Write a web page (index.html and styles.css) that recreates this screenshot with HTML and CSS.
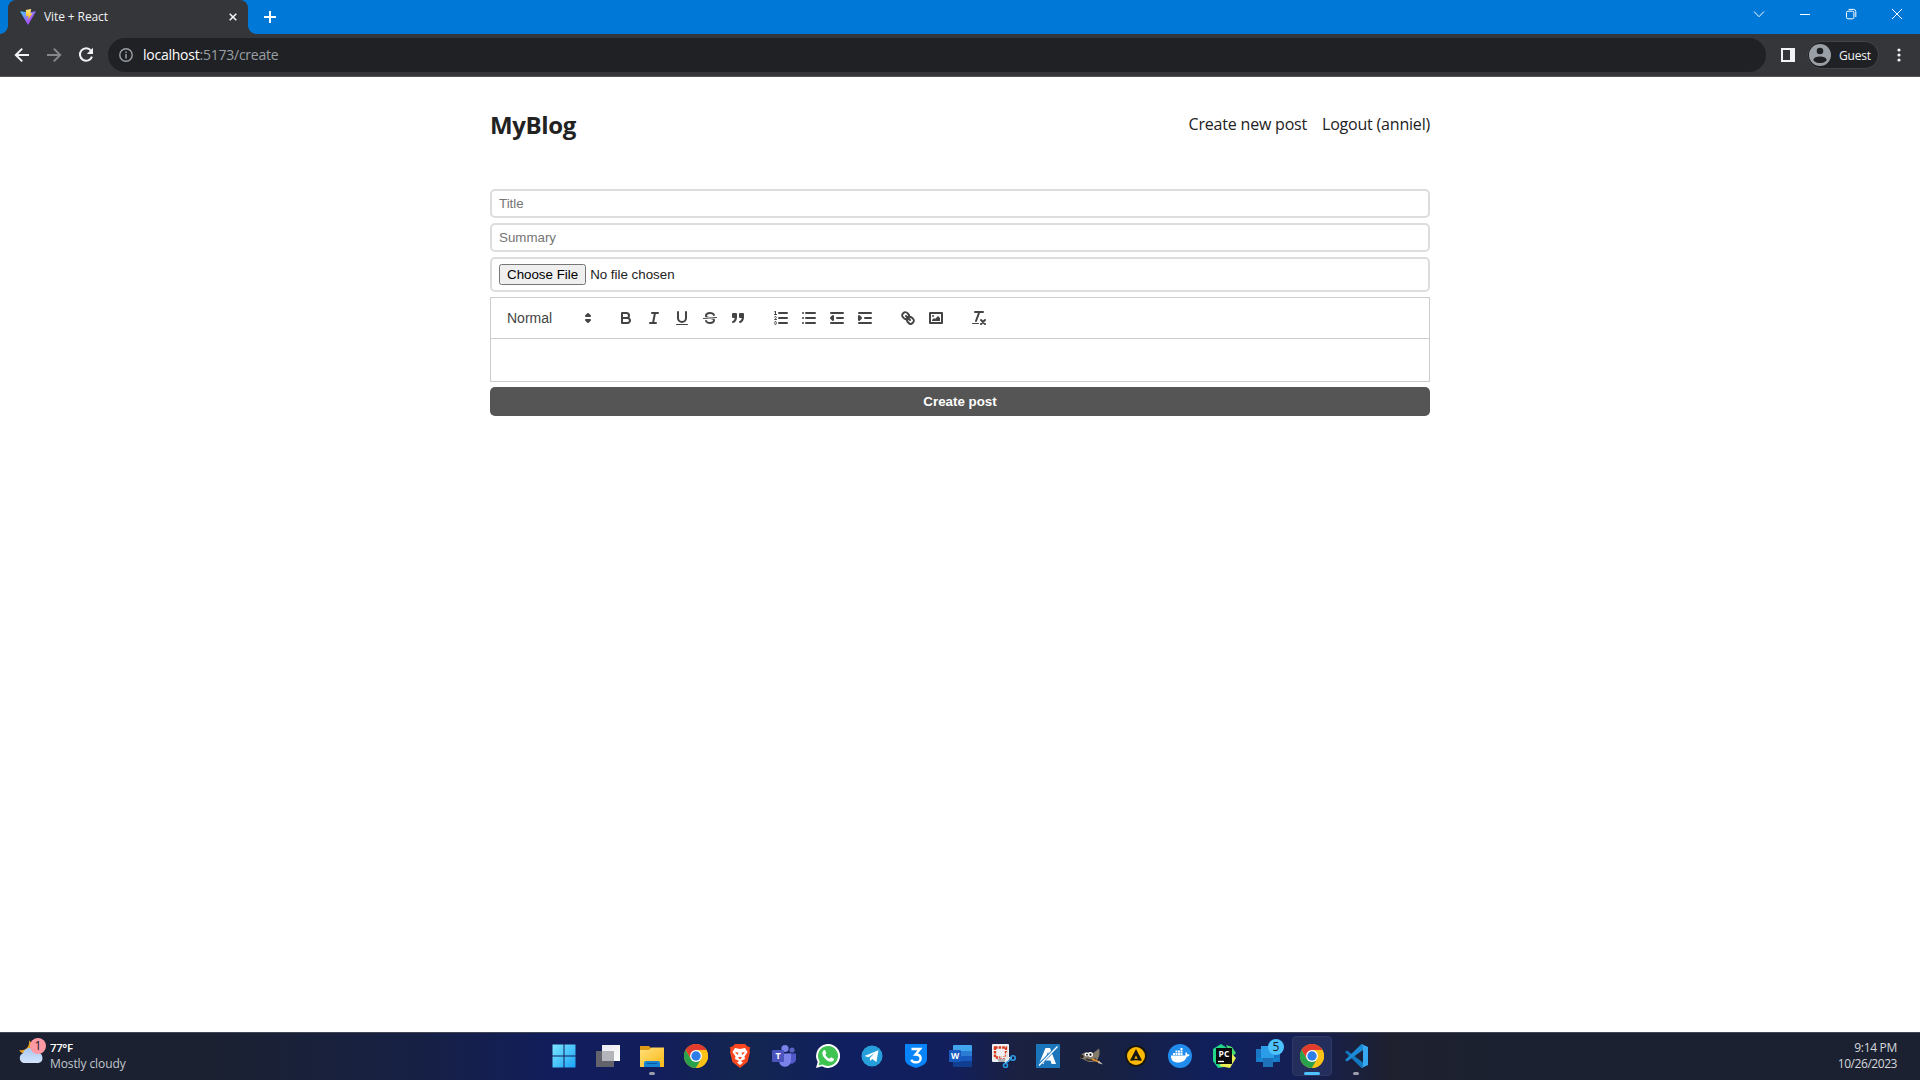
FILE: index.html
```html
<!DOCTYPE html>
<html lang="en">
<head>
<meta charset="utf-8">
<title>Vite + React</title>
<link rel="stylesheet" href="styles.css">
</head>
<body>
<svg class="defs" width="0" height="0" aria-hidden="true">
  <defs>
    <linearGradient id="viteBody" x1="0" y1="0" x2="1" y2="1"><stop offset="0" stop-color="#41d1ff"/><stop offset=".6" stop-color="#a45cff"/><stop offset="1" stop-color="#bd34fe"/></linearGradient>
    <linearGradient id="viteBolt" x1="0" y1="0" x2="0" y2="1"><stop offset="0" stop-color="#ffea83"/><stop offset="1" stop-color="#ffa800"/></linearGradient>
    <linearGradient id="winTile" x1="0" y1="0" x2="1" y2="1"><stop offset="0" stop-color="#7be6ff"/><stop offset="1" stop-color="#1aa3f5"/></linearGradient>
    <linearGradient id="cloud" x1="0" y1="0" x2="0" y2="1"><stop offset="0" stop-color="#a5c6f5"/><stop offset="1" stop-color="#d5e5fb"/></linearGradient>
    <linearGradient id="folder" x1="0" y1="0" x2="1" y2="1"><stop offset="0" stop-color="#ffe07a"/><stop offset="1" stop-color="#fbb917"/></linearGradient>
    <linearGradient id="pane" x1="0" y1="0" x2="1" y2="1"><stop offset="0" stop-color="#e9e9ef"/><stop offset="1" stop-color="#fff"/></linearGradient>
    <symbol id="chrome" viewBox="0 0 24 24">
      <circle cx="12" cy="12" r="12" fill="#fbc116"/>
      <path d="M1.6 6A12 12 0 0 1 22.4 6H12L7 15Z" fill="#e33b2e"/>
      <path d="M1.6 6A12 12 0 0 0 12 24L17.2 15L6.8 15Z" fill="#2aa24c"/>
      <path d="M22.4 6A12 12 0 0 1 12 24L17.2 15L12 6Z" fill="#fbc116"/>
      <circle cx="12" cy="12" r="6" fill="#fff"/><circle cx="12" cy="12" r="4.7" fill="#2f7de9"/>
    </symbol>
  </defs>
</svg>

<header class="browser">
  <div class="tabstrip">
    <div class="tab">
      <svg class="favicon" viewBox="0 0 16 16"><path d="M0 2.2L8 16L16 2.2L8.5 3.6Z" fill="url(#viteBody)"/><path d="M5.8 1L11.2 0L10.4 4.5L12.5 4.2L8.2 11L8.5 7L6.2 7.4Z" fill="url(#viteBolt)"/></svg>
      <span class="tab-title">Vite + React</span>
      <svg class="tab-close" viewBox="0 0 8 8"><path d="M.7 .7L7.3 7.3M7.3 .7L.7 7.3" stroke="#f1f3f4" stroke-width="1.6"/></svg>
    </div>
    <svg class="new-tab" viewBox="0 0 12 12"><path d="M6 0V12M0 6H12" stroke="#fff" stroke-width="2"/></svg>
    <div class="window-controls">
      <svg viewBox="0 0 12 12"><path d="M1 3.5L6 8.7L11 3.5"/></svg>
      <svg viewBox="0 0 12 12"><path d="M1 6.5H11"/></svg>
      <svg viewBox="0 0 12 12"><rect x="1.5" y="3.2" width="7.4" height="7.6" rx="1.5"/><path d="M3.6 1.4H8.6A2.3 2.3 0 0 1 10.8 3.6V9"/></svg>
      <svg viewBox="0 0 12 12"><path d="M1 1L11 11M11 1L1 11"/></svg>
    </div>
  </div>
  <div class="toolbar">
    <svg class="nav-icon" viewBox="0 0 16 16"><path d="M15 8H2M8.2 1.6L1.8 8L8.2 14.4" fill="none" stroke="#f1f3f4" stroke-width="2"/></svg>
    <svg class="nav-icon" viewBox="0 0 16 16"><path d="M1 8H14M7.8 1.6L14.2 8L7.8 14.4" fill="none" stroke="#85878a" stroke-width="2"/></svg>
    <svg class="nav-icon" viewBox="0 0 16 16"><path d="M13 3.6A6.2 6.2 0 1 0 14 9.6" fill="none" stroke="#f1f3f4" stroke-width="2"/><path d="M15 .8V7H8.8Z" fill="#f1f3f4"/></svg>
    <div class="omnibox">
      <svg class="info" viewBox="0 0 14 14"><circle cx="7" cy="7" r="6.2" fill="none" stroke="#9aa0a6" stroke-width="1.4"/><path d="M7 6V10.5M7 3.4V5" stroke="#9aa0a6" stroke-width="1.5"/></svg>
      <span class="url"><b>localhost</b>:5173/create</span>
    </div>
    <svg class="side-panel" viewBox="0 0 14 14"><path d="M0 0H14V14H0ZM2 2V12H9V2Z" fill="#f1f3f4" fill-rule="evenodd"/></svg>
    <div class="profile">
      <svg viewBox="0 0 22 22"><circle cx="11" cy="11" r="11" fill="#9aa0a6"/><circle cx="11" cy="7" r="3.3" fill="#202124"/><path d="M4.3 16.2C4.5 13.4 8 12.4 11 12.4S17.5 13.4 17.7 16.2C16 18.2 13.6 19 11 19S6 18.2 4.3 16.2Z" fill="#202124"/></svg>
      <span>Guest</span>
    </div>
    <svg class="menu" viewBox="0 0 4 14"><circle cx="2" cy="2" r="1.6"/><circle cx="2" cy="7" r="1.6"/><circle cx="2" cy="12" r="1.6"/></svg>
  </div>
</header>

<main class="page">
  <header class="site-header">
    <a class="logo">MyBlog</a>
    <nav><a class="link-create">Create new post</a><a class="link-logout">Logout (anniel)</a></nav>
  </header>
  <form class="post-form">
    <input type="text" placeholder="Title">
    <input type="text" placeholder="Summary">
    <input type="file">
    <div class="editor">
      <div class="editor-toolbar">
        <div class="picker"><span>Normal</span><svg class="q" viewBox="0 0 18 18"><polygon class="s" points="7 11 9 13 11 11 7 11"/><polygon class="s" points="7 7 9 5 11 7 7 7"/></svg></div>
        <div class="group">
          <svg class="q" viewBox="0 0 18 18"><path class="s" d="M5,4H9.5A2.5,2.5,0,0,1,12,6.5v0A2.5,2.5,0,0,1,9.5,9H5V4Z"/><path class="s" d="M5,9h5.5A2.5,2.5,0,0,1,13,11.5v0A2.5,2.5,0,0,1,10.5,14H5V9Z"/></svg>
          <svg class="q" viewBox="0 0 18 18"><path class="s" d="M7 4H13M5 14H11M8 14L10 4"/></svg>
          <svg class="q" viewBox="0 0 18 18"><path class="s" d="M5,3V9a4.012,4.012,0,0,0,4,4H9a4.012,4.012,0,0,0,4-4V3"/><rect class="f" x="3" y="15" width="12" height="1" rx=".5"/></svg>
          <svg class="q" viewBox="0 0 18 18"><path class="s t" d="M15.5 8.5L2.5 9.5"/><path class="f" d="M9.007,8C6.542,7.791,6,7.519,6,6.5,6,5.792,7.283,5,9,5c1.571,0,2.765.679,2.969,1.309a1,1,0,0,0,1.9-.617C13.356,4.106,11.354,3,9,3,6.2,3,4,4.538,4,6.5a3.2,3.2,0,0,0,.5,1.843Z"/><path class="f" d="M8.984,10C11.457,10.208,12,10.479,12,11.5c0,0.708-1.283,1.5-3,1.5-1.571,0-2.765-.679-2.969-1.309a1,1,0,1,0-1.9.617C4.644,13.894,6.646,15,9,15c2.8,0,5-1.538,5-3.5a3.2,3.2,0,0,0-.5-1.843Z"/></svg>
          <svg class="q" viewBox="0 0 18 18"><rect class="s f" x="4" y="5" width="3" height="3"/><rect class="s f" x="11" y="5" width="3" height="3"/><path class="s f" d="M7,8c0,4.031-3,5-3,5M14,8c0,4.031-3,5-3,5"/></svg>
        </div>
        <div class="group">
          <svg class="q" viewBox="0 0 18 18"><path class="s" d="M7 4H15M7 9H15M7 14H15"/><path class="s t" d="M2.5 5.5H4.5"/><path class="f" d="M3.5,6A0.5,0.5,0,0,1,3,5.5V3.085l-0.276.138A0.5,0.5,0,0,1,2.053,3c-0.124-.247-0.023-0.324.224-0.447l1-.5A0.5,0.5,0,0,1,4,2.5v3A0.5,0.5,0,0,1,3.5,6Z"/><path class="s t" d="M4.5,10.5h-2c0-.234,1.85-1.076,1.85-2.234A0.959,0.959,0,0,0,2.5,8.156"/><path class="s t" d="M2.5,14.846a0.959,0.959,0,0,0,1.85-.109A0.7,0.7,0,0,0,3.75,14a0.688,0.688,0,0,0,.6-0.736,0.959,0.959,0,0,0-1.85-.109"/></svg>
          <svg class="q" viewBox="0 0 18 18"><path class="s" d="M6 4H15M6 9H15M6 14H15M3 4H3M3 9H3M3 14H3"/></svg>
          <svg class="q" viewBox="0 0 18 18"><path class="s" d="M3 14H15M3 4H15M9 9H15"/><polyline class="s f" points="5 7 5 11 3 9 5 7"/></svg>
          <svg class="q" viewBox="0 0 18 18"><path class="s" d="M3 14H15M3 4H15M9 9H15"/><polyline class="s f" points="3 7 3 11 5 9 3 7"/></svg>
        </div>
        <div class="group">
          <svg class="q" viewBox="0 0 18 18"><path class="s" d="M7 7L11 11M8.9,4.577a3.476,3.476,0,0,1,.36,4.679A3.476,3.476,0,0,1,4.577,8.9C3.185,7.5,2.035,6.4,4.217,4.217S7.5,3.185,8.9,4.577Z"/><path class="s" d="M13.423,9.1a3.476,3.476,0,0,0-4.679-.36,3.476,3.476,0,0,0,.36,4.679c1.392,1.392,2.5,2.542,4.679.36S14.815,10.5,13.423,9.1Z"/></svg>
          <svg class="q" viewBox="0 0 18 18"><rect class="s" x="3" y="4" width="12" height="10"/><circle class="f" cx="6" cy="7" r="1"/><polyline class="f" points="5 12 5 11 7 9 8 10 11 7 13 9 13 12 5 12"/></svg>
        </div>
        <div class="group">
          <svg class="q" viewBox="0 0 18 18"><path class="s" d="M5 3H13M6 12L9.35 3M11 11L15 15M15 11L11 15"/><rect class="f" x="2" y="14" width="7" height="1" rx=".5"/></svg>
        </div>
      </div>
      <div class="editor-body"></div>
    </div>
    <button type="button">Create post</button>
  </form>
</main>

<footer class="taskbar">
  <div class="weather">
    <div class="weather-icon">
      <svg viewBox="0 0 26 26"><path d="M11 3.5C12 9 8 14.5 1.2 13C3 18 12 18 14 11C14.800 7.500 13 5 11 3.500Z" fill="#e9a11f"/><path d="M5.500 26A5.200 5.200 0 0 1 5 16.200A8 8 0 0 1 20 15.800A5.200 5.200 0 0 1 20.500 26Z" fill="url(#cloud)"/></svg>
      <span class="badge pink">1</span>
    </div>
    <div class="weather-text"><span class="temp">77°F</span><span class="sky">Mostly cloudy</span></div>
  </div>
  <div class="apps">
    <div class="app"><svg viewBox="0 0 24 24"><path d="M.5 .5H11.500V11.500H.5ZM12.500 .5H23.500V11.500H12.500ZM.5 12.500H11.500V23.500H.5ZM12.500 12.500H23.500V23.500H12.500Z" fill="url(#winTile)"/></svg></div>
    <div class="app"><svg viewBox="0 0 24 24"><rect x="0" y="7" width="18" height="16" fill="#62636b"/><rect x="6" y="1" width="18" height="16" fill="url(#pane)"/><rect x="6" y="7" width="12" height="10" fill="#b4b5ba"/></svg></div>
    <div class="app running"><svg viewBox="0 0 24 24"><path d="M0 2H9L11 4H13V8H0Z" fill="#dc9a16"/><path d="M0 6H9L11.500 3.500H24V23H0Z" fill="url(#folder)"/><path d="M4 23V19Q4 17 6 17H18Q20 17 20 19V23Z" fill="#1684d3"/><path d="M7 19.500H17" stroke="#0b579d"/></svg></div>
    <div class="app"><svg viewBox="0 0 24 24"><use href="#chrome"/></svg></div>
    <div class="app"><svg viewBox="0 0 24 24"><path d="M7 0H17L19.500 2.500L22 3L21.500 7L22 8L19.500 18L12 24L4.500 18L2 8L2.500 7L2 3L4.500 2.500Z" fill="#f9471f"/><path d="M7 4L12 5L17 4L19.500 8L16.500 12.500L17 15L12.800 17L15 18.500L12 21L9 18.500L11.200 17L7 15L7.500 12.500L4.500 8Z" fill="#fff"/><path d="M7 8L10.500 8.800L9.500 11ZM17 8L13.500 8.800L14.500 11ZM10 13.500L12 15.500L14 13.500L12 12.800Z" fill="#f9471f"/></svg></div>
    <div class="app"><svg viewBox="0 0 24 24"><circle cx="20" cy="6" r="2.600" fill="#5b62c5"/><path d="M16 9.500H24V16A4.500 4.500 0 0 1 16 18Z" fill="#5059c9"/><circle cx="13" cy="4.500" r="3.600" fill="#7b83eb"/><path d="M7 9.500H19V16A6 6 0 0 1 7 17.500Z" fill="#7b83eb"/><rect x="0" y="6" width="12" height="12" rx="1" fill="#4b53bc"/><text class="glyph" x="6" y="15.300" font-size="9">T</text></svg></div>
    <div class="app"><svg viewBox="0 0 24 24"><path d="M0 24L1.700 18A12 12 0 1 1 6 22.300Z" fill="#fff"/><path d="M2.600 21.400L3.700 17.500A10 10 0 1 1 6.700 20.400Z" fill="#3fc351"/><path d="M7.500 6.500C8.300 5.700 9 6 9.300 6.600L10.300 9C10.300 9.700 9.700 10.200 9.300 10.700C10.300 12.500 11.700 13.900 13.600 14.700L15 13.200L18 14.700C18.300 16.500 16.500 17.700 15 17.700C11 17.700 6.500 12.800 6.300 9.500C6.300 8.200 7 7 7.500 6.500Z" fill="#fff"/></svg></div>
    <div class="app"><svg viewBox="0 0 24 24"><circle cx="12" cy="12" r="10.500" fill="#279fda"/><path d="M4.500 12L18.500 6.200L16.400 18L12.300 14.900L10.200 17.100L9.800 13.900L15 9L8.500 13.200Z" fill="#fff"/></svg></div>
    <div class="app"><svg viewBox="0 0 24 24"><path d="M1 0H23V15C23 20 18 22 12 24C6 22 1 20 1 15Z" fill="#0784fa"/><path d="M7.500 5H16L11.500 10.500C18.500 10.500 18 18.300 12 18.300C9.500 18.300 8 17.200 7.200 15.800" fill="none" stroke="#fff" stroke-width="2.400"/></svg></div>
    <div class="app"><svg viewBox="0 0 24 24"><path d="M6 1H23Q24 1 24 2V7H5V2Q5 1 6 1Z" fill="#41a5ee"/><path d="M5 7H24V12H5Z" fill="#2b7cd3"/><path d="M5 12H24V17H5Z" fill="#185abd"/><path d="M5 17H24V22Q24 23 23 23H6Q5 23 5 22Z" fill="#103f91"/><rect x="1" y="6" width="12" height="12" rx="1" fill="#185abd"/><text class="glyph" x="7" y="15" font-size="8.500">W</text></svg></div>
    <div class="app"><svg viewBox="0 0 24 24"><rect x="0" y="0" width="17" height="18" rx="1" fill="#f0f0f2"/><path d="M5 15H14V18H7Z" fill="#aeb0b5"/><rect x="3" y="3.500" width="11" height="10" fill="none" stroke="#d83b1c" stroke-width="2.400" stroke-dasharray="2.600 1"/><path d="M8 13L20 14M13.500 19L15 8" stroke="#e8e8ea" stroke-width="1.500"/><circle cx="21" cy="14" r="2.200" fill="none" stroke="#2a9be5" stroke-width="1.600"/><circle cx="13.500" cy="21.500" r="2" fill="none" stroke="#2a9be5" stroke-width="1.600"/><path d="M14 19L19 15" stroke="#2a9be5" stroke-width="1.600"/></svg></div>
    <div class="app"><svg viewBox="0 0 24 24"><path d="M0 0H24V24H0Z" fill="#1b75bb"/><path d="M3 20L9.500 4H14L20 20H15.500L14.500 16.500H9L7.500 20ZM10 13H13.500L12 8Z" fill="#fff" fill-rule="evenodd"/><path d="M2 22L22 2" stroke="#1b75bb" stroke-width="3"/><path d="M3 21.500L21.500 2.500" stroke="#fff" stroke-width="1.300"/></svg></div>
    <div class="app"><svg viewBox="0 0 24 24"><path d="M1 11C4 8 7 8.500 10 8L12 10L19 4.500C20 8 20 13 16.500 17C12 19 7 18 4 15.500L0 14Z" fill="#82796b"/><circle cx="1.800" cy="12.500" r="1.800" fill="#25211d"/><circle cx="6.500" cy="10.500" r="2" fill="#fff"/><circle cx="10.500" cy="10.500" r="2.500" fill="#fff"/><circle cx="7" cy="10.700" r=".9"/><circle cx="10.500" cy="10.700" r="1.100"/><path d="M6 15Q11 17.500 16 15" stroke="#37312b" stroke-width="1.500" fill="none"/><path d="M12 15L19 18" stroke="#e9912c" stroke-width="1.800"/><path d="M19 17L23 20.500L18 19Z" fill="#d7d0c5"/></svg></div>
    <div class="app"><svg viewBox="0 0 24 24"><circle cx="12" cy="12" r="11" fill="#171611"/><circle cx="12" cy="12" r="9" fill="#ffb900"/><path d="M12 5L18 16.500H14.500L12 11.500L9.500 16.500H6ZM10 14H14" fill="#171611"/><path d="M6.800 15.500H17" stroke="#171611" stroke-width="1.600"/></svg></div>
    <div class="app"><svg viewBox="0 0 24 24"><circle cx="12" cy="12" r="12" fill="#218cec"/><path d="M3 11.500H17.500Q17 9.300 18 8Q19.300 9 19.400 10.400Q21 10 21.700 11Q20.500 12.800 18.800 12.800C17 17 14 18.500 10 18.500C5.500 18.500 3 16.500 3 11.500Z" fill="#fff"/><path d="M5 9H7V11H5ZM7.500 9H9.500V11H7.500ZM10 9H12V11H10ZM12.500 9H14.500V11H12.500ZM7.500 6.500H9.500V8.500H7.500ZM10 6.500H12V8.500H10ZM12.500 6.500H14.500V8.500H12.500ZM12.500 4H14.500V6H12.500Z" fill="#fff"/></svg></div>
    <div class="app"><svg viewBox="0 0 24 24"><path d="M1 5L9 0L15 4L12 23L6 24L1 17Z" fill="#21d789"/><path d="M14 1L20 3L24 9L20 13Z" fill="#45dc70"/><path d="M20 10L24 14L18 24L7 22Z" fill="#e9ee55"/><rect x="4" y="4" width="16" height="16" fill="#0b0b0d"/><text class="glyph" x="12" y="13" font-size="8.500">PC</text><path d="M6 17.500H12" stroke="#fff" stroke-width="1.300"/></svg></div>
    <div class="app"><svg viewBox="0 0 24 24"><path d="M0 5H7V18H0Z" fill="#1976c5"/><path d="M17 7H24V18H17Z" fill="#1976c5"/><path d="M5 2H18V18H5Z" fill="#2b9de8"/><path d="M0 14H24L20 18H4Z" fill="#1683d1"/><path d="M7 14H17V23H7Z" fill="#1e72b9"/></svg><span class="badge blue">5</span></div>
    <div class="app active"><svg viewBox="0 0 24 24"><use href="#chrome"/></svg></div>
    <div class="app running"><svg viewBox="0 0 24 24"><path d="M1 8L3 6.500L19 18.500V23.500L17.500 24Z" fill="#1279c0"/><path d="M1 16L3 17.500L19 6V1L17.500 0Z" fill="#1b8bd6"/><path d="M17.500 0L24 3V21L17.500 24Q19 23 19 21V3Q19 1 17.500 0Z" fill="#35a8f1"/></svg></div>
  </div>
  <div class="clock"><span class="time">9:14 PM</span><span class="date">10/26/2023</span></div>
</footer>
</body>
</html>
```
FILE: styles.css
```css
* { box-sizing: border-box; }
body {
  margin: 0;
  height: 1080px;
  overflow: hidden;
  display: flex;
  flex-direction: column;
  background: #fff;
  color: #222;
  font-family: "Open Sans", "Noto Sans", sans-serif;
}
.defs { position: absolute; }
svg { display: block; flex: none; }

.browser { height: 77px; flex: none; background: #35363a; border-bottom: 1px solid #55525a; }
.tabstrip { height: 34px; display: flex; align-items: center; background: #0078d7; padding-left: 8px; }
.tab {
  position: relative;
  width: 240px;
  height: 34px;
  padding: 0 11px 0 12px;
  display: flex;
  align-items: center;
  background: #35363a;
  border-radius: 8px 8px 0 0;
  color: #f1f3f4;
}
.tab::before, .tab::after {
  content: "";
  position: absolute;
  bottom: 0;
  width: 8px;
  height: 8px;
}
.tab::before { left: -8px; background: radial-gradient(circle at 0 0, transparent 7.5px, #35363a 8px); }
.tab::after { right: -8px; background: radial-gradient(circle at 100% 0, transparent 7.5px, #35363a 8px); }
.favicon { width: 16px; height: 16px; }
.tab-title { margin-left: 8px; font-size: 12px; line-height: 16px; letter-spacing: -0.1px; }
.tab-close { width: 8px; height: 8px; margin-left: auto; }
.new-tab { width: 12px; height: 12px; margin-left: 16px; }
.window-controls { margin-left: auto; padding: 0 17px 6px 0; display: flex; gap: 34px; }
.window-controls svg { width: 12px; height: 12px; fill: none; stroke: #fff; stroke-width: 1; }

.toolbar { height: 42px; display: flex; align-items: center; padding-left: 14px; }
.nav-icon { width: 16px; height: 16px; margin-right: 16px; }
.omnibox {
  width: 1658px;
  height: 34px;
  margin-left: -2px;
  padding-left: 11px;
  display: flex;
  align-items: center;
  background: #202124;
  border-radius: 17px;
}
.info { width: 14px; height: 14px; }
.url { margin-left: 10px; font-size: 14px; line-height: 20px; letter-spacing: -0.24px; color: #9aa0a6; }
.url b { font-weight: 400; color: #fff; }
.side-panel { width: 14px; height: 14px; margin-left: 15px; }
.profile {
  width: 72px;
  height: 28px;
  margin-left: 12px;
  padding-left: 2px;
  display: flex;
  align-items: center;
  gap: 8px;
  background: #202124;
  border: 1px solid #434448;
  border-radius: 14px;
  color: #f1f3f4;
  font-size: 12px;
  letter-spacing: -0.2px;
}
.profile svg { width: 22px; height: 22px; margin-left: -1px; }
.menu { width: 4px; height: 14px; margin-left: 18px; fill: #f1f3f4; }

.page { flex: 1; width: 960px; margin: 0 auto; padding: 30px 10px 0; }
.site-header { height: 32px; margin-top: 1px; margin-bottom: 49px; display: flex; justify-content: space-between; align-items: center; }
.logo { font-size: 24px; font-weight: 700; letter-spacing: -0.35px; }
nav { display: flex; gap: 15px; font-size: 16px; }
.link-create { letter-spacing: -0.2px; }
.link-logout { letter-spacing: -0.2px; }

.post-form { display: flex; flex-direction: column; gap: 5px; font-family: "Liberation Sans", Arial, sans-serif; }
.post-form input {
  width: 100%;
  margin: 0;
  padding: 5px 7px;
  border: 2px solid #ddd;
  border-radius: 5px;
  background: #fff;
  font-family: "Liberation Sans", Arial, sans-serif;
  font-size: 13.333px;
}
.post-form input[type="text"] { height: 29px; }
.post-form input[type="file"] { height: 35px; }
.editor-toolbar { height: 42px; padding: 8px; display: flex; gap: 15px; border: 1px solid #ccc; }
.picker {
  width: 98px;
  height: 24px;
  padding-left: 8px;
  display: flex;
  justify-content: space-between;
  align-items: center;
  color: #444;
  font-size: 14px;
  line-height: 22px;
}
.group { display: flex; height: 24px; padding: 3px 5px; gap: 10px; }
.q { width: 18px; height: 18px; }
.f { fill: #444; }
.s { fill: none; stroke: #444; stroke-width: 2; stroke-linecap: round; stroke-linejoin: round; }
.s.f { fill: #444; }
.s.t { stroke-width: 1; }
.editor-body { height: 43px; border: 1px solid #ccc; border-top: 0; }
.post-form button {
  width: 100%;
  height: 29px;
  padding: 0;
  border: 0;
  border-radius: 5px;
  background: #555;
  color: #fff;
  font: 700 13.333px "Liberation Sans", Arial, sans-serif;
}

.taskbar {
  flex: none;
  height: 48px;
  display: grid;
  grid-template-columns: 1fr 836px 1fr;
  background: linear-gradient(90deg, #1b2130 0, #1b2130 200px, #162044 420px, #111d5c 560px, #121d5c 650px, #132650 745px, #101f60 850px, #121f5c 950px, #1b2140 1020px, #182140 1100px, #101f5c 1215px, #141f54 1300px, #1e202e 1390px, #1b2130 1500px);
  border-top: 1px solid #434655;
  color: #fff;
  font-size: 12px;
  line-height: 16px;
}
.weather { display: flex; align-items: flex-start; padding: 5px 0 0 18px; }
.weather-icon { position: relative; width: 26px; height: 28px; }
.weather-icon svg { width: 26px; height: 26px; margin-top: -1px; }
.weather-text { margin-left: 6px; padding-top: 2px; display: flex; flex-direction: column; }
.temp { font-weight: 600; font-size: 11.5px; letter-spacing: -0.4px; }
.sky { color: #c3c7ce; letter-spacing: -0.1px; }
.badge {
  position: absolute;
  width: 16px;
  height: 16px;
  border-radius: 50%;
  color: #15171d;
  font-size: 12px;
  line-height: 16px;
  text-align: center;
}
.badge.pink { top: 0; right: -2px; background: #ff99a4; }
.badge.blue { top: 6px; right: 6px; background: #4cc2ff; }
.apps { display: flex; }
.app { position: relative; width: 44px; height: 47px; padding: 11px 10px; }
.app svg { width: 24px; height: 24px; }
.glyph { fill: #fff; font-family: "Open Sans", sans-serif; font-weight: 700; text-anchor: middle; }
.app.running::after, .app.active::after {
  content: "";
  position: absolute;
  left: 19px;
  bottom: 5px;
  width: 6px;
  height: 3px;
  border-radius: 2px;
  background: #999cab;
}
.app.active::after { left: 14px; width: 16px; background: #4cc2ff; }
.app.active::before {
  content: "";
  position: absolute;
  inset: 3px 2px 4px;
  border-radius: 4px;
  border: 1px solid #303863;
  background: #232e5d;
}
.app.active svg { position: relative; }
.clock { display: flex; flex-direction: column; align-items: flex-end; padding: 7px 23px 0 0; color: #d5d8dd; }
.time { letter-spacing: -0.3px; }
.date { letter-spacing: -0.45px; }
```
